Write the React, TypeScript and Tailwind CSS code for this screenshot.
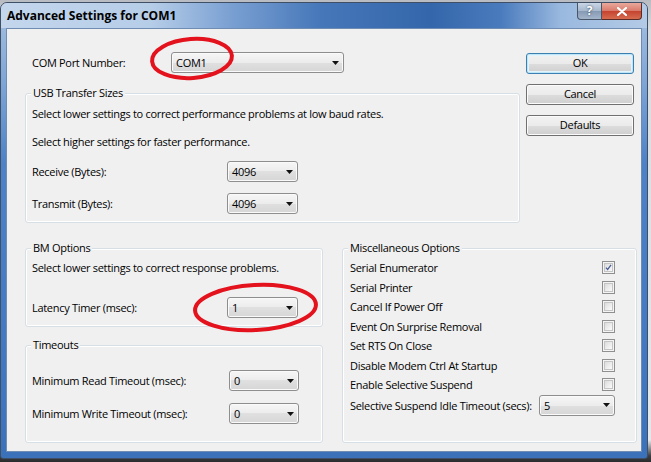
import React from "react";

const font = { fontFamily: '"Open Sans", "Noto Sans", Arial, sans-serif' };

function Select({ value, w }: { value: string; w: string }) {
  return (
    <div
      className={`${w} h-[21px] shrink-0 rounded-[3px] border border-[#8e8e8e] bg-[linear-gradient(to_bottom,#f6f6f6,#ececec_50%,#e0e0e0_50%,#d6d6d6)] shadow-[inset_0_0_0_1px_#fafafa] flex items-center justify-between pl-[4px] pr-[4px] text-black`}
    >
      <span className="leading-[15px]">{value}</span>
      <svg width="7" height="4" viewBox="0 0 7 4">
        <path d="M0 0H7L3.5 4Z" fill="#111" />
      </svg>
    </div>
  );
}

function Button({ label, primary }: { label: string; primary?: boolean }) {
  return (
    <div
      className={`h-[21px] w-[108px] rounded-[3px] border flex items-center justify-center text-black bg-[linear-gradient(to_bottom,#f2f2f2,#ebebeb_50%,#dddddd_50%,#cfcfcf)] ${
        primary
          ? "border-[#3c7fb1] shadow-[inset_0_0_0_1px_#bfe6f7,inset_0_0_0_2px_#e2f3fb]"
          : "border-[#707070] shadow-[inset_0_0_0_1px_#fbfbfb]"
      }`}
    >
      {label}
    </div>
  );
}

function Check({ checked }: { checked?: boolean }) {
  return (
    <div className="w-[13px] h-[13px] shrink-0 border border-[#8f8f8f] bg-[#f4f4f4] p-[1px]">
      <div className="w-full h-full border border-[#c4c4c4] bg-[linear-gradient(to_bottom_right,#dcdcdc,#fbfbfb)] flex items-center justify-center">
        {checked && (
          <svg width="9" height="9" viewBox="0 0 9 9">
            <path d="M1.2 4.6L3.4 7L7.8 1" fill="none" stroke="#4a5e96" strokeWidth="1.6" />
          </svg>
        )}
      </div>
    </div>
  );
}

function Group({
  title,
  className,
  children,
}: {
  title: string;
  className: string;
  children: React.ReactNode;
}) {
  return (
    <div
      className={`relative rounded-[3px] border border-[#d5dfe5] shadow-[inset_0_0_0_1px_#ffffff] ${className}`}
    >
      <div className="absolute -top-[9px] left-[5px] px-[2px] bg-[#f0f0f0] leading-[15px] text-black whitespace-nowrap">
        {title}
      </div>
      {children}
    </div>
  );
}

export default function App() {
  const misc = [
    ["Serial Enumerator", true],
    ["Serial Printer", false],
    ["Cancel If Power Off", false],
    ["Event On Surprise Removal", false],
    ["Set RTS On Close", false],
    ["Disable Modem Ctrl At Startup", false],
    ["Enable Selective Suspend", false],
  ] as const;

  return (
    <div
      className="relative w-[651px] h-[462px] overflow-hidden bg-[linear-gradient(to_bottom,#b8bcc2_0px,#d9dcdf_30px,#e4e6e8_440px,#3b3d40_456px,#2a2b2d)]"
      style={font}
    >
      {/* window */}
      <div className="absolute left-0 top-[2px] w-[648px] h-[457px] rounded-t-[7px] rounded-b-[3px] border border-[#3f4f66] flex flex-col overflow-hidden bg-[linear-gradient(to_bottom,#a9c2e0,#7ea5d6_80px,#4d82c7_160px,#3f76bf_400px,#3b71b9)]">
        {/* title bar */}
        <div className="h-[25px] shrink-0 flex items-start bg-[linear-gradient(to_right,#c3d6ec_0px,#b6cde8_150px,#7aa0d2_230px,#4677b9_320px,#3466ab_430px,#4a7bbd_500px,#9ab9df_560px,#b4cbe6_648px)]">
          <div className="ml-[6px] mt-[5px] text-[12px] font-bold leading-[16px] text-black">
            Advanced Settings for COM1
          </div>
          <div className="ml-auto mr-[5px] flex">
            <div className="w-[25px] h-[17px] rounded-bl-[4px] border border-t-0 border-[#4a5668] bg-[linear-gradient(to_bottom,#c9d6e6,#a6b7cc_50%,#8599b3_50%,#a3b5ca)] flex items-center justify-center text-[12px] font-bold text-white leading-none [text-shadow:0_0_2px_#23334a]">
              ?
            </div>
            <div className="w-[40px] h-[17px] rounded-br-[4px] border border-t-0 border-l-0 border-[#5a2a24] bg-[linear-gradient(to_bottom,#e9a99c,#d8796a_50%,#c5422e_50%,#d66b4f)] flex items-center justify-center">
              <svg width="10" height="9" viewBox="0 0 10 9">
                <path d="M1 1L9 8M9 1L1 8" stroke="#ffffff" strokeWidth="2.2" strokeLinecap="round" />
              </svg>
            </div>
          </div>
        </div>

        {/* client */}
        <div className="flex-1 mx-[5px] mb-[6px] border border-[#6f8db3] bg-[#f0f0f0] flex flex-col text-[11px] tracking-[-0.3px] text-black">
          <div className="flex">
            <div className="ml-[18px] w-[495px] flex flex-col">
              <div className="mt-[23px] h-[21px] flex items-center">
                <div className="w-[146px] pl-[7px] leading-[15px]">COM Port Number:</div>
                <Select value="COM1" w="w-[173px]" />
              </div>
              <Group title="USB Transfer Sizes" className="mt-[20px] h-[130px] pl-[6px] pt-[12px]">
                <div className="leading-[15px]">
                  Select lower settings to correct performance problems at low baud rates.
                </div>
                <div className="mt-[13px] leading-[15px]">Select higher settings for faster performance.</div>
                <div className="mt-[12px] h-[21px] flex items-center">
                  <div className="w-[195px] leading-[15px]">Receive (Bytes):</div>
                  <Select value="4096" w="w-[71px]" />
                </div>
                <div className="mt-[11px] h-[21px] flex items-center">
                  <div className="w-[195px] leading-[15px]">Transmit (Bytes):</div>
                  <Select value="4096" w="w-[71px]" />
                </div>
              </Group>
            </div>
            <div className="ml-[6px] mt-[24px] flex flex-col gap-[10px]">
              <Button label="OK" primary />
              <Button label="Cancel" />
              <Button label="Defaults" />
            </div>
          </div>

          <div className="mt-[25px] flex">
            <div className="ml-[18px] w-[298px] flex flex-col">
              <Group title="BM Options" className="h-[79px] pl-[6px] pt-[11px]">
                <div className="leading-[15px]">Select lower settings to correct response problems.</div>
                <div className="mt-[22px] h-[21px] flex items-center">
                  <div className="w-[195px] leading-[15px]">Latency Timer (msec):</div>
                  <Select value="1" w="w-[71px]" />
                </div>
              </Group>
              <Group title="Timeouts" className="mt-[18px] h-[98px] pl-[6px] pt-[24px]">
                <div className="h-[21px] flex items-center">
                  <div className="w-[197px] leading-[15px]">Minimum Read Timeout (msec):</div>
                  <Select value="0" w="w-[70px]" />
                </div>
                <div className="mt-[12px] h-[21px] flex items-center">
                  <div className="w-[197px] leading-[15px]">Minimum Write Timeout (msec):</div>
                  <Select value="0" w="w-[70px]" />
                </div>
              </Group>
            </div>
            <Group title="Miscellaneous Options" className="ml-[19px] w-[295px] h-[195px] pl-[7px] pr-[21px] pt-[9px]">
              {misc.map(([label, checked]) => (
                <div key={label} className="h-[19.5px] flex items-center justify-between">
                  <span className="leading-[15px] whitespace-nowrap">{label}</span>
                  <Check checked={checked} />
                </div>
              ))}
              <div className="h-[21px] flex items-center">
                <div className="w-[193px] leading-[15px] whitespace-nowrap">Selective Suspend Idle Timeout (secs):</div>
                <Select value="5" w="w-[76px]" />
              </div>
            </Group>
          </div>
        </div>
      </div>

      {/* red annotation circles */}
      <svg className="absolute left-0 top-0 pointer-events-none" width="651" height="462">
        <ellipse cx="192" cy="58.5" rx="40" ry="19.5" fill="none" stroke="#e3121c" strokeWidth="4" transform="rotate(-4 192 58.5)" />
        <ellipse cx="255.5" cy="307.5" rx="60.5" ry="22.5" fill="none" stroke="#e3121c" strokeWidth="4" transform="rotate(-3 255.5 307.5)" />
      </svg>
    </div>
  );
}
